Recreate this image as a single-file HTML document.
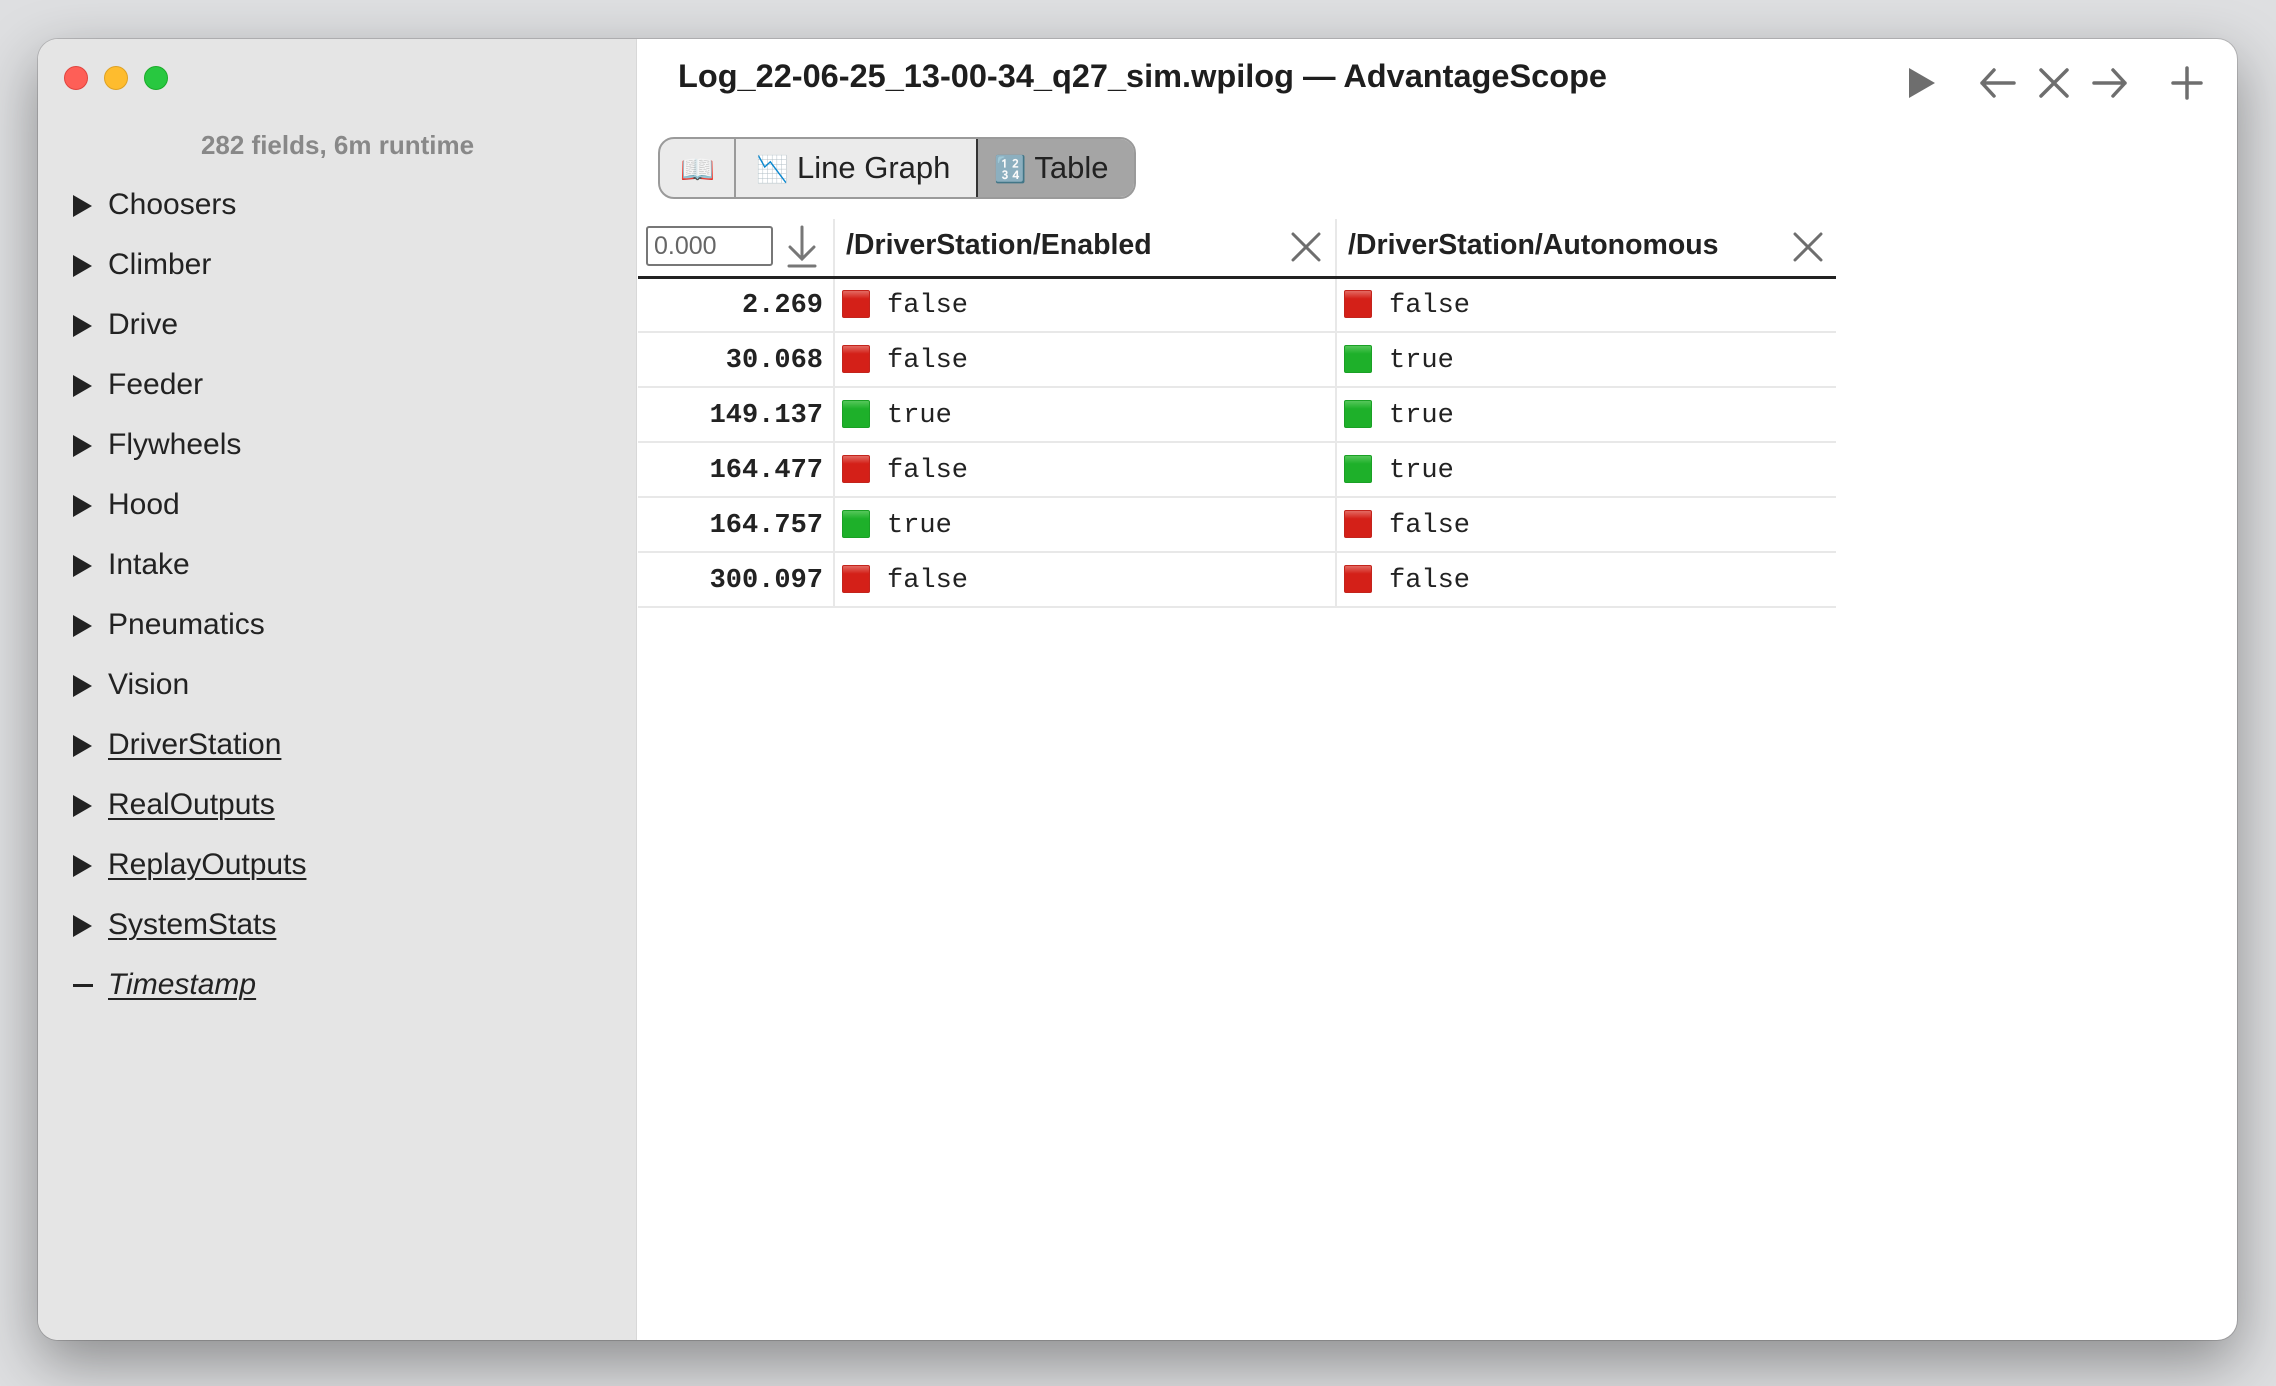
<!DOCTYPE html>
<html><head><meta charset="utf-8"><style>
*{margin:0;padding:0;box-sizing:border-box}
body{width:2276px;height:1386px;background:#dedfe1;position:relative;overflow:hidden;font-family:"Liberation Sans",sans-serif}
.win{position:absolute;left:38px;top:39px;width:2199px;height:1301px;border-radius:20px;background:#fff;overflow:hidden;box-shadow:0 22px 60px rgba(0,0,0,.38),0 0 0 1px rgba(0,0,0,.15)}
.side{position:absolute;left:0;top:0;width:599px;height:100%;background:#e5e5e5;border-right:1px solid #d8d8d8}
.tl{position:absolute;top:27px;width:24px;height:24px;border-radius:50%}
.ab{position:absolute;color:#222}
.sum{position:absolute;left:0;width:599px;top:91px;text-align:center;color:#888;font-weight:bold;font-size:26px}
.item{position:absolute;left:35px;font-size:30px;color:#222;height:40px;line-height:40px}
.item .tri{position:absolute;left:0;top:10px;width:0;height:0;border-left:19px solid #222;border-top:11px solid transparent;border-bottom:11px solid transparent}
.item span{position:absolute;left:35px;white-space:nowrap}
.u{text-decoration:underline;text-decoration-thickness:2px;text-underline-offset:4px}
.mono{font-family:"Liberation Mono",monospace;font-size:27px;color:#222;position:absolute}
.ts{left:560px;width:225px;text-align:right;font-weight:bold}
.sq{position:absolute;width:28px;height:28px;border-radius:2px}
.r{background:linear-gradient(#e36a62,#d42018 30%);border:1px solid #c3241c}
.g{background:linear-gradient(#55c65a,#1eb02a 30%);border:1px solid #1aa025}
.hl{position:absolute;left:600px;width:1198px;height:2px;background:#e8e8e8}
</style></head><body>
<div class="win">
 <div class="side">
  <div class="tl" style="left:26px;background:#fe5f57;border:1px solid #e0443e"></div>
  <div class="tl" style="left:66px;background:#febc2e;border:1px solid #dea123"></div>
  <div class="tl" style="left:106px;background:#28c840;border:1px solid #1aab29"></div>
  <div class="sum">282 fields, 6m runtime</div>
  <div class="item" style="top:146px"><div class="tri"></div><span>Choosers</span></div>
  <div class="item" style="top:206px"><div class="tri"></div><span>Climber</span></div>
  <div class="item" style="top:266px"><div class="tri"></div><span>Drive</span></div>
  <div class="item" style="top:326px"><div class="tri"></div><span>Feeder</span></div>
  <div class="item" style="top:386px"><div class="tri"></div><span>Flywheels</span></div>
  <div class="item" style="top:446px"><div class="tri"></div><span>Hood</span></div>
  <div class="item" style="top:506px"><div class="tri"></div><span>Intake</span></div>
  <div class="item" style="top:566px"><div class="tri"></div><span>Pneumatics</span></div>
  <div class="item" style="top:626px"><div class="tri"></div><span>Vision</span></div>
  <div class="item" style="top:686px"><div class="tri"></div><span class="u">DriverStation</span></div>
  <div class="item" style="top:746px"><div class="tri"></div><span class="u">RealOutputs</span></div>
  <div class="item" style="top:806px"><div class="tri"></div><span class="u">ReplayOutputs</span></div>
  <div class="item" style="top:866px"><div class="tri"></div><span class="u">SystemStats</span></div>
  <div class="item" style="top:926px"><div style="position:absolute;left:0;top:19px;width:20px;height:3px;background:#222"></div><span class="u" style="font-style:italic">Timestamp</span></div>
 </div>
 <div class="ab" style="left:640px;top:19px;font-size:32.5px;font-weight:bold;white-space:nowrap;color:#1e1e1e">Log_22-06-25_13-00-34_q27_sim.wpilog — AdvantageScope</div>
 <svg style="position:absolute;left:1860px;top:25px" width="320" height="40" viewBox="0 0 320 40" fill="none" stroke="#6e6e6e" stroke-width="3.5" stroke-linecap="round" stroke-linejoin="round">
  <path d="M11 4 L37 19 L11 34 Z" fill="#6e6e6e" stroke="none"/>
  <path d="M84 19 H116 M96 6 L84 19 L96 32"/>
  <path d="M143 6 L169 32 M169 6 L143 32"/>
  <path d="M196 19 H227 M215 6 L227 19 L215 32"/>
  <path d="M289 4 V34 M275 19 H303"/>
 </svg>
 <div style="position:absolute;left:620px;top:98px;width:478px;height:62px;border:2px solid #9a9a9a;border-radius:16px;background:#ebebeb;overflow:hidden">
  <div style="position:absolute;left:74px;top:0;width:2px;height:100%;background:#9a9a9a"></div>
  <div style="position:absolute;left:20px;top:14px;font-size:28px">📖</div>
  <div style="position:absolute;left:96px;top:11px;font-size:31px;color:#222;white-space:nowrap"><span style="font-size:26px">📉</span> Line Graph</div>
  <div style="position:absolute;left:316px;top:-2px;width:164px;height:62px;background:#a5a5a5;border:2px solid #333;border-radius:0 16px 16px 0"></div>
  <div style="position:absolute;left:334px;top:11px;font-size:31px;color:#222;white-space:nowrap"><span style="font-size:26px">🔢</span> Table</div>
 </div>
 <div style="position:absolute;left:608px;top:187px;width:127px;height:40px;border:2px solid #777;border-radius:3px;font-size:25px;color:#666;padding:4px 0 0 6px">0.000</div>
 <svg style="position:absolute;left:748px;top:186px" width="32" height="44" fill="none" stroke="#777" stroke-width="3" stroke-linecap="round"><path d="M16 2 V34 M4 22 L16 34 L28 22 M3 41 H29"/></svg>
 <div style="position:absolute;left:795px;top:180px;width:2px;height:389px;background:#e8e8e8"></div>
 <div style="position:absolute;left:1297px;top:180px;width:2px;height:389px;background:#e8e8e8"></div>
 <div class="ab" style="left:808px;top:190px;font-size:28.5px;font-weight:bold;white-space:nowrap">/DriverStation/Enabled</div>
 <div class="ab" style="left:1310px;top:190px;font-size:28.5px;font-weight:bold;white-space:nowrap">/DriverStation/Autonomous</div>
 <svg style="position:absolute;left:1252px;top:192px" width="32" height="32" stroke="#6e6e6e" stroke-width="3" stroke-linecap="round"><path d="M3 3 L29 29 M29 3 L3 29"/></svg>
 <svg style="position:absolute;left:1754px;top:192px" width="32" height="32" stroke="#6e6e6e" stroke-width="3" stroke-linecap="round"><path d="M3 3 L29 29 M29 3 L3 29"/></svg>
 <div style="position:absolute;left:600px;top:237px;width:1198px;height:3px;background:#222"></div>
 <div class="hl" style="top:292px"></div>
 <div class="hl" style="top:347px"></div>
 <div class="hl" style="top:402px"></div>
 <div class="hl" style="top:457px"></div>
 <div class="hl" style="top:512px"></div>
 <div class="hl" style="top:567px"></div>

 <div class="mono ts" style="top:252px">2.269</div>
 <div class="sq r" style="left:804px;top:251px"></div><div class="mono" style="left:849px;top:252px">false</div>
 <div class="sq r" style="left:1306px;top:251px"></div><div class="mono" style="left:1351px;top:252px">false</div>

 <div class="mono ts" style="top:307px">30.068</div>
 <div class="sq r" style="left:804px;top:306px"></div><div class="mono" style="left:849px;top:307px">false</div>
 <div class="sq g" style="left:1306px;top:306px"></div><div class="mono" style="left:1351px;top:307px">true</div>

 <div class="mono ts" style="top:362px">149.137</div>
 <div class="sq g" style="left:804px;top:361px"></div><div class="mono" style="left:849px;top:362px">true</div>
 <div class="sq g" style="left:1306px;top:361px"></div><div class="mono" style="left:1351px;top:362px">true</div>

 <div class="mono ts" style="top:417px">164.477</div>
 <div class="sq r" style="left:804px;top:416px"></div><div class="mono" style="left:849px;top:417px">false</div>
 <div class="sq g" style="left:1306px;top:416px"></div><div class="mono" style="left:1351px;top:417px">true</div>

 <div class="mono ts" style="top:472px">164.757</div>
 <div class="sq g" style="left:804px;top:471px"></div><div class="mono" style="left:849px;top:472px">true</div>
 <div class="sq r" style="left:1306px;top:471px"></div><div class="mono" style="left:1351px;top:472px">false</div>

 <div class="mono ts" style="top:527px">300.097</div>
 <div class="sq r" style="left:804px;top:526px"></div><div class="mono" style="left:849px;top:527px">false</div>
 <div class="sq r" style="left:1306px;top:526px"></div><div class="mono" style="left:1351px;top:527px">false</div>
</div>
</body></html>
